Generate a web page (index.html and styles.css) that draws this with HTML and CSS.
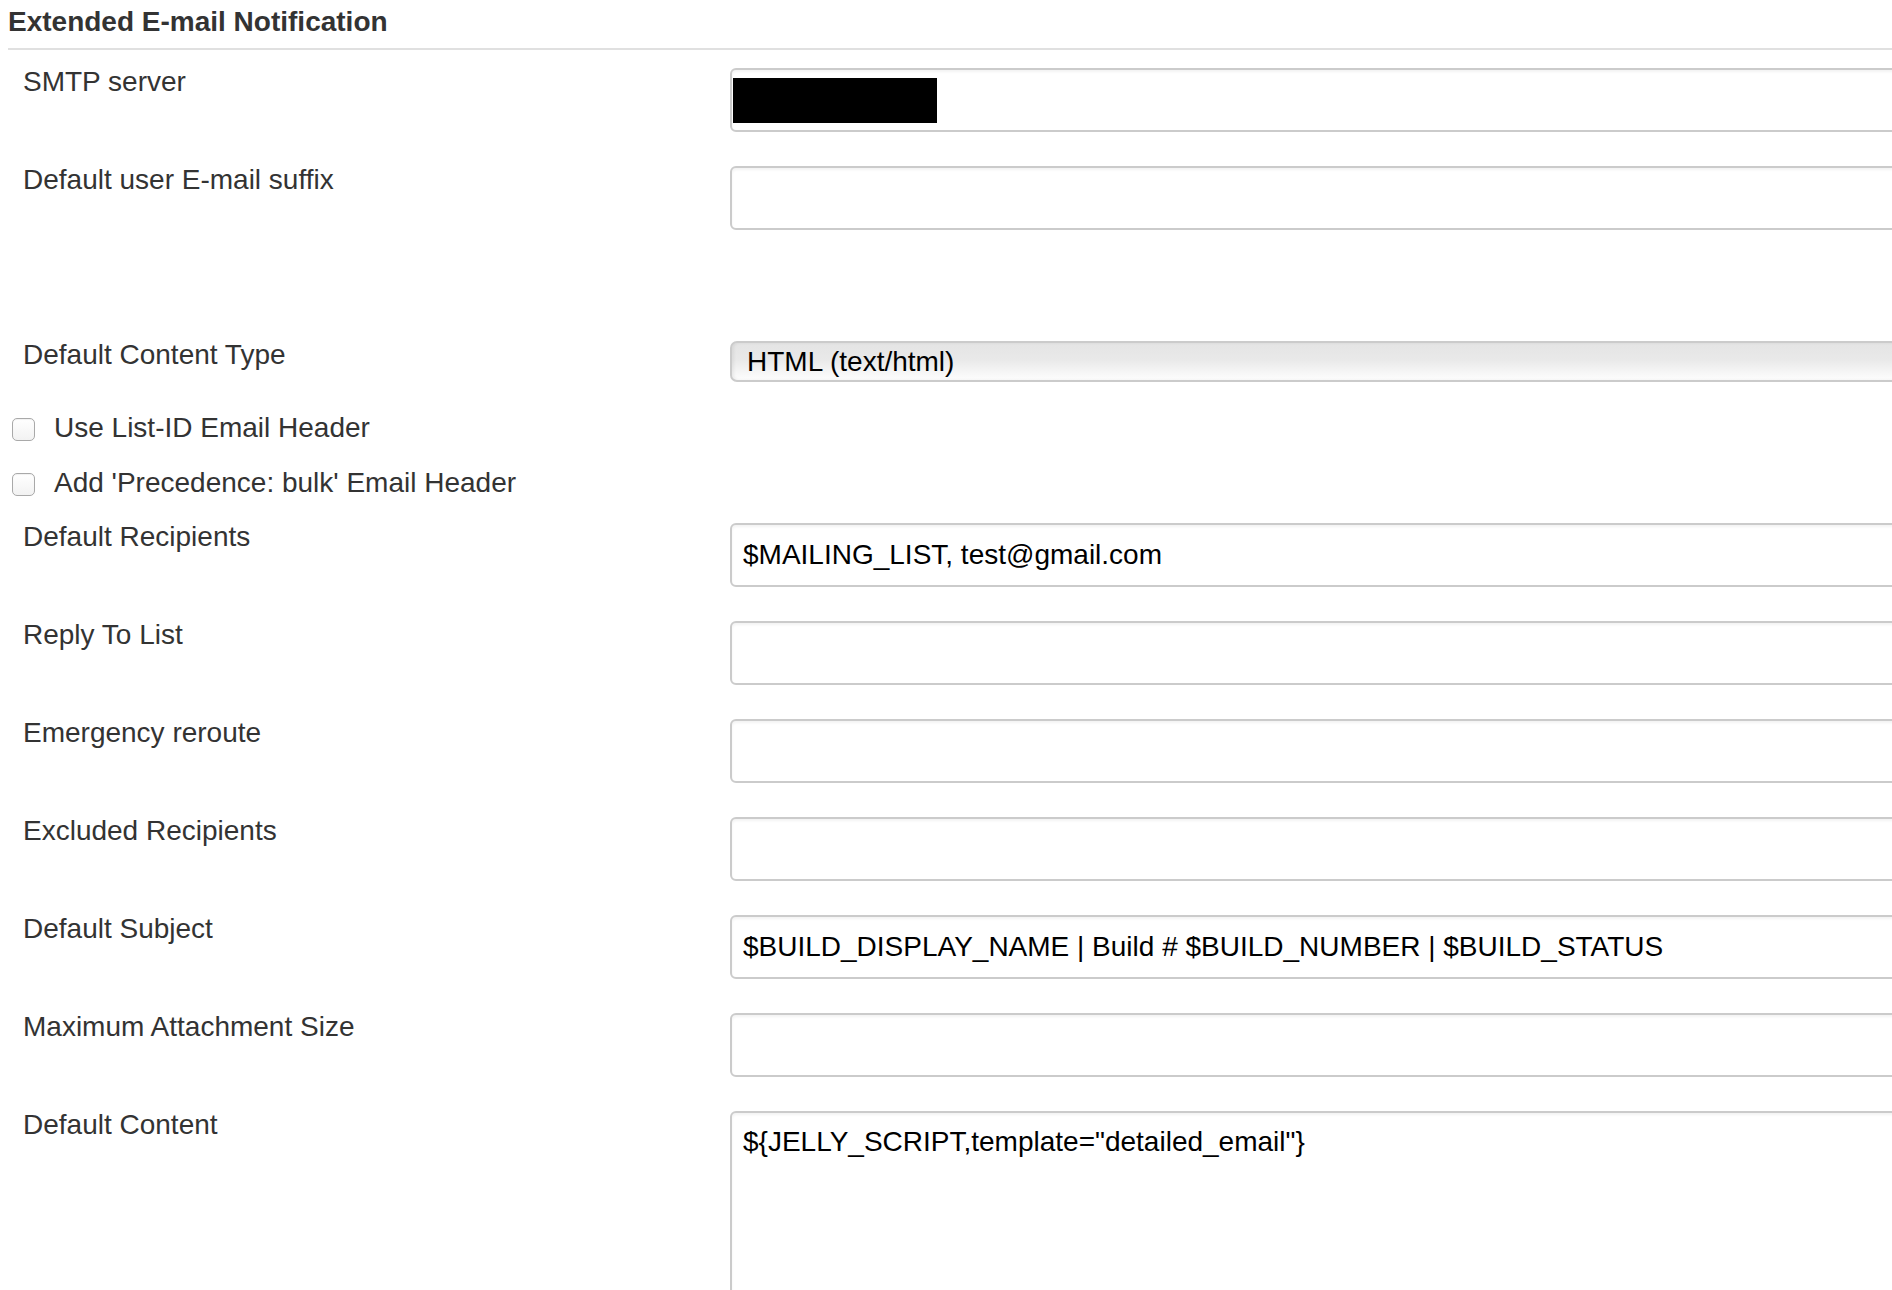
FILE: index.html
```html
<!DOCTYPE html>
<html lang="en">
<head>
<meta charset="utf-8">
<title>Extended E-mail Notification</title>
<link rel="stylesheet" href="styles.css">
</head>
<body>
<div class="section">
  <div class="section-title">Extended E-mail Notification</div>
  <div class="form">
    <div class="row field">
      <div class="label">SMTP server</div>
      <div class="value">
        <div class="input-wrap">
          <input class="text" type="text" value="">
          <span class="redact"></span>
        </div>
      </div>
    </div>
    <div class="row field gap-large">
      <div class="label">Default user E-mail suffix</div>
      <div class="value"><input class="text" type="text" value=""></div>
    </div>
    <div class="row select-row">
      <div class="label">Default Content Type</div>
      <div class="value">
        <div class="select">HTML (text/html)</div>
      </div>
    </div>
    <div class="check-row first">
      <span class="box"></span>
      <span class="check-label">Use List-ID Email Header</span>
    </div>
    <div class="check-row second">
      <span class="box"></span>
      <span class="check-label">Add 'Precedence: bulk' Email Header</span>
    </div>
    <div class="row field">
      <div class="label">Default Recipients</div>
      <div class="value"><input class="text" type="text" value="$MAILING_LIST, test@gmail.com"></div>
    </div>
    <div class="row field">
      <div class="label">Reply To List</div>
      <div class="value"><input class="text" type="text" value=""></div>
    </div>
    <div class="row field">
      <div class="label">Emergency reroute</div>
      <div class="value"><input class="text" type="text" value=""></div>
    </div>
    <div class="row field">
      <div class="label">Excluded Recipients</div>
      <div class="value"><input class="text" type="text" value=""></div>
    </div>
    <div class="row field">
      <div class="label">Default Subject</div>
      <div class="value"><input class="text" type="text" value="$BUILD_DISPLAY_NAME | Build # $BUILD_NUMBER | $BUILD_STATUS"></div>
    </div>
    <div class="row field">
      <div class="label">Maximum Attachment Size</div>
      <div class="value"><input class="text" type="text" value=""></div>
    </div>
    <div class="row field">
      <div class="label">Default Content</div>
      <div class="value"><textarea class="area">${JELLY_SCRIPT,template="detailed_email"}</textarea></div>
    </div>
  </div>
</div>
</body>
</html>
```
FILE: styles.css
```css
html, body {
  margin: 0;
  padding: 0;
  background: #fff;
  overflow: hidden;
}
body {
  height: 1290px;
  font-family: "Liberation Sans", Arial, Helvetica, sans-serif;
  color: #333;
}
.section {
  margin-left: 8px;
  width: 2200px;
}
.section-title {
  margin-top: 6px;
  font-size: 28px;
  line-height: 32px;
  font-weight: bold;
  color: #333;
  padding-bottom: 10px;
  border-bottom: 2px solid #e0e0e0;
}
.form {
  padding-top: 15px;
}
.row {
  display: grid;
  grid-template-columns: 722px 1fr;
}
.label {
  padding-left: 15px;
  padding-top: 1px;
  font-size: 28px;
  line-height: 32px;
  color: #333;
}
.value {
  padding-top: 3px;
}
.field {
  padding-bottom: 31px;
}
.gap-large {
  padding-bottom: 108px;
}
.select-row {
  padding-bottom: 30px;
}
.input-wrap {
  position: relative;
}
.text {
  display: block;
  box-sizing: border-box;
  width: 100%;
  height: 64px;
  margin: 0;
  padding: 0 11px;
  border: 2px solid #cbcbcb;
  border-radius: 6px;
  background: #fff;
  box-shadow: inset 0 2px 3px rgba(0, 0, 0, 0.05);
  font-family: "Liberation Sans", Arial, Helvetica, sans-serif;
  font-size: 28px;
  color: #000;
  outline: none;
}
.redact {
  position: absolute;
  left: 3px;
  top: 10px;
  width: 204px;
  height: 45px;
  background: #000;
}
.select {
  box-sizing: border-box;
  height: 41px;
  padding-left: 15px;
  border: 2px solid #cbcbcb;
  border-radius: 7px;
  background: linear-gradient(to bottom, #e4e4e4 0%, #e9e9e9 45%, #f6f6f6 80%, #fdfdfd 100%);
  box-shadow: inset 2px 0 3px rgba(0, 0, 0, 0.06);
  font-size: 28px;
  line-height: 37px;
  color: #000;
}
.check-row {
  display: flex;
  align-items: center;
  height: 32px;
  padding-left: 4px;
}
.check-row.first {
  padding-bottom: 23px;
}
.check-row.second {
  padding-bottom: 21px;
}
.box {
  box-sizing: border-box;
  width: 23px;
  height: 23px;
  margin-top: 3px;
  border: 1px solid #a9a9a9;
  border-radius: 5px;
  background: linear-gradient(to bottom, #ffffff, #f2f2f2);
  box-shadow: inset 0 1px 1px rgba(0, 0, 0, 0.06);
}
.check-label {
  margin-left: 19px;
  font-size: 28px;
  line-height: 32px;
  color: #333;
}
.area {
  display: block;
  box-sizing: border-box;
  width: 100%;
  height: 260px;
  margin: 0;
  padding: 13px 11px;
  border: 2px solid #cbcbcb;
  border-radius: 6px;
  background: #fff;
  box-shadow: inset 0 2px 3px rgba(0, 0, 0, 0.05);
  font-family: "Liberation Sans", Arial, Helvetica, sans-serif;
  font-size: 28px;
  line-height: 32px;
  color: #000;
  resize: none;
  outline: none;
}
```
